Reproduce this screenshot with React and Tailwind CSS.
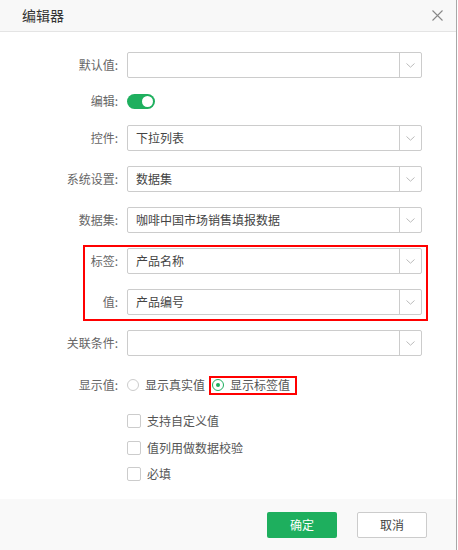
import React from 'react';

const font = { fontFamily: '"Noto Sans CJK SC", "Liberation Sans", sans-serif' };

function Chevron() {
  return (
    <svg width="9" height="5" viewBox="0 0 9 5" fill="none">
      <path d="M0.5 0.5 L4.5 4.2 L8.5 0.5" stroke="#bbb" strokeWidth="1" />
    </svg>
  );
}

function Select({ value }) {
  return (
    <div className="ml-[9px] flex h-[26px] w-[295px] rounded-[2px] border border-[#cccccc] bg-white">
      <div className="flex flex-1 items-center px-[8px] text-[12px] text-[#444]">{value}</div>
      <div className="flex w-[22px] items-center justify-center border-l border-[#cccccc]">
        <Chevron />
      </div>
    </div>
  );
}

function Row({ label, value, className = '' }) {
  return (
    <div className={`flex items-center ${className}`}>
      <div className="w-[118px] text-right text-[12px] text-[#666]">{label}:</div>
      <Select value={value} />
    </div>
  );
}

function Radio({ checked, label }) {
  return (
    <div className="flex items-center">
      <span
        className={`flex h-[12px] w-[12px] items-center justify-center rounded-full border ${
          checked ? 'border-[#1eaf5e]' : 'border-[#cccccc]'
        }`}
      >
        {checked && <span className="h-[4px] w-[4px] rounded-full bg-[#1eaf5e]" />}
      </span>
      <span className="ml-[6px] text-[12px] text-[#555]">{label}</span>
    </div>
  );
}

function Check({ label, className = '' }) {
  return (
    <div className={`flex h-[14px] items-center ${className}`}>
      <span className="h-[14px] w-[14px] rounded-[2px] border border-[#cccccc] bg-white" />
      <span className="ml-[6px] text-[12px] text-[#555]">{label}</span>
    </div>
  );
}

export default function App() {
  return (
    <div className="flex h-[550px] w-[458px] bg-white" style={font}>
      <div className="flex h-full w-[457px] flex-col border-r border-[#a8a8a8]">
        {/* header */}
        <div className="flex h-[32px] items-center justify-between border-b border-[#e4e4e4] bg-[#f8f8f8] pl-[22px] pr-[13px]">
          <span className="text-[14px] text-[#333]">编辑器</span>
          <svg width="11" height="11" viewBox="0 0 11 11" fill="none">
            <path d="M0.5 0.5 L10.5 10.5 M10.5 0.5 L0.5 10.5" stroke="#888" strokeWidth="1.1" />
          </svg>
        </div>

        {/* body */}
        <div className="flex flex-col pt-[20px]">
          <Row label="默认值" value="" />

          <div className="mt-[16px] flex h-[14px] items-center">
            <div className="w-[118px] text-right text-[12px] text-[#666]">编辑:</div>
            <div className="ml-[9px] flex h-[15px] w-[28px] items-center justify-end rounded-full bg-[#1eaf5e] pr-[2px]">
              <span className="h-[11px] w-[11px] rounded-full bg-white" />
            </div>
          </div>

          <Row label="控件" value="下拉列表" className="mt-[17px]" />
          <Row label="系统设置" value="数据集" className="mt-[15px]" />
          <Row label="数据集" value="咖啡中国市场销售填报数据" className="mt-[15px]" />

          <div className="relative mt-[15px] flex flex-col">
            <Row label="标签" value="产品名称" />
            <Row label="值" value="产品编号" className="mt-[15px]" />
            <span className="pointer-events-none absolute -top-[3px] -bottom-[6px] left-[83px] w-[345px] border-2 border-[#ff0000]" />
          </div>

          <Row label="关联条件" value="" className="mt-[15px]" />

          <div className="mt-[19px] flex h-[20px] items-center">
            <div className="w-[118px] text-right text-[12px] text-[#666]">显示值:</div>
            <div className="ml-[9px] flex items-center">
              <Radio label="显示真实值" />
              <div className="ml-[4px] flex h-[19px] w-[88px] items-center border-2 border-[#ff0000] pl-[1px]">
                <Radio checked label="显示标签值" />
              </div>
            </div>
          </div>

          <div className="ml-[127px] mt-[19px] flex flex-col">
            <Check label="支持自定义值" />
            <Check label="值列用做数据校验" className="mt-[13px]" />
            <Check label="必填" className="mt-[12px]" />
          </div>
        </div>

        {/* footer */}
        <div className="mt-auto flex h-[51px] items-start justify-end gap-[20px] bg-[#f9f9f9] pr-[29px] pt-[13px]">
          <button className="h-[26px] w-[70px] rounded-[2px] bg-[#1eaf5e] text-[12px] text-white">确定</button>
          <button className="h-[26px] w-[70px] rounded-[2px] border border-[#cccccc] bg-white text-[12px] text-[#444]">
            取消
          </button>
        </div>
      </div>
    </div>
  );
}
